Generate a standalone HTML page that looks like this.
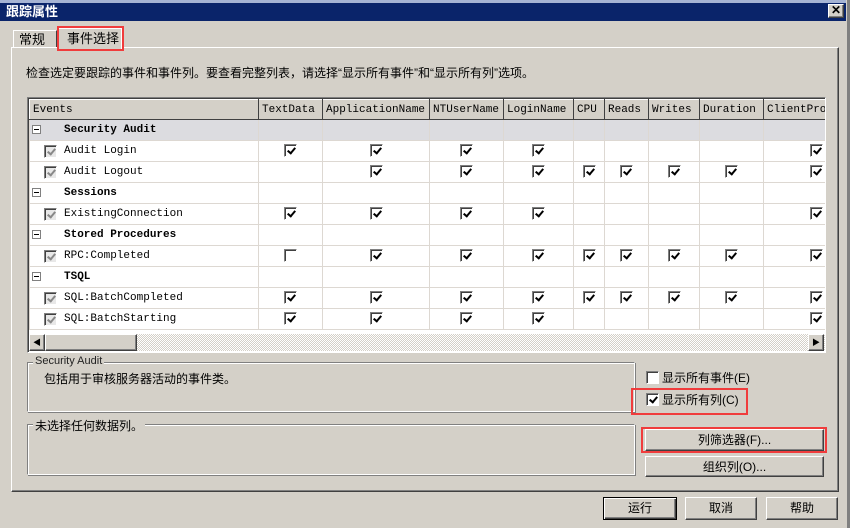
<!DOCTYPE html>
<html><head><meta charset="utf-8"><style>
*{box-sizing:border-box;margin:0;padding:0}
body{width:850px;height:528px;background:#d4d0c8;position:relative;overflow:hidden;font-family:"Liberation Sans","Noto Sans CJK SC",sans-serif;font-size:12px;color:#000}
.a{position:absolute}
.raised{border:1px solid;border-color:#fff #404040 #404040 #fff;box-shadow:inset -1px -1px #808080}
.grp{border:1px solid;border-color:#808080 #fff #fff #808080;box-shadow:inset 1px 1px #fff, 1px 1px #808080}
table{border-collapse:collapse;table-layout:fixed;font-family:"Liberation Mono","Noto Sans CJK SC",monospace;font-size:11px}
td{height:21px;border:1px solid #ddd8d2;padding:0;text-align:center;white-space:nowrap;overflow:hidden}
th{height:20px;font-weight:normal;text-align:left;padding-left:3px;background:#d4d0c8;border:1px solid;border-color:#fff #404040 #404040 #fff;white-space:nowrap;overflow:hidden}
td.ev{text-align:left;padding-left:34px;position:relative}
tr.g td{font-weight:bold}
tr.sel td{background:#dcdce0}
.cb{display:inline-block;width:13px;height:13px;border:1px solid;border-color:#808080 #fff #fff #808080;box-shadow:inset 1px 1px #404040;background:#fff;vertical-align:middle;position:relative}
.cb.k::after{content:"";position:absolute;left:4px;top:1px;width:3px;height:6px;border:solid #000;border-width:0 2px 2px 0;transform:rotate(40deg)}
.cb.g{background:#e8e8e8}
.cb.g::after{border-color:#888}
.cb.p{position:absolute;left:14px;top:4px}
td.r{text-align:right;padding-right:2px}
.mi{position:absolute;left:2px;top:5px;width:9px;height:9px;border:1px solid #808080;background:#fff}
.mi::after{content:"";position:absolute;left:1px;top:3px;width:5px;height:1px;background:#000}
.btn{position:absolute;text-align:center;line-height:20px;background:#d4d0c8}
</style></head><body>
<div class="a" style="left:0;top:0;width:850px;height:3px;background:#a6b4d4"></div>
<div class="a" style="left:0;top:3px;width:846px;height:18px;background:#0a246a;color:#fff;font-weight:bold;font-size:13px;line-height:18px;padding-left:6px">跟踪属性</div>
<div class="a raised" style="left:828px;top:4px;width:16px;height:14px;background:#d4d0c8;font-size:12px;line-height:11px;text-align:center;font-weight:bold">✕</div>
<div class="a" style="left:846px;top:0;width:4px;height:528px;background:#808080;border-left:1px solid #d4d0c8"></div>

<div class="a" style="left:13px;top:30px;width:44px;height:18px;border:1px solid;border-color:#fff #404040 transparent #fff;padding-left:5px;line-height:17px;font-size:13px">常规</div>
<div class="a" style="left:11px;top:47px;width:828px;height:445px;border:1px solid;border-color:#fff #404040 #404040 #fff;box-shadow:inset -1px -1px #808080"></div>
<div class="a" style="left:58px;top:28px;width:64px;height:21px;background:#d4d0c8;border:1px solid #fff;border-bottom:none;line-height:19px;padding-left:8px;font-size:13px">事件选择</div>
<div class="a" style="left:57px;top:26px;width:67px;height:25px;border:2px solid #f03c3c"></div>

<div class="a" style="left:26px;top:64px;font-size:12px">检查选定要跟踪的事件和事件列。要查看完整列表，请选择“显示所有事件”和“显示所有列”选项。</div>

<div class="a" style="left:27px;top:97px;width:799px;height:256px;border:1px solid;border-color:#808080 #fff #fff #808080;box-shadow:inset 1px 1px #404040;background:#fff;overflow:hidden">
<table style="width:796px;margin-left:1px;margin-top:1px">
<colgroup><col style="width:229px"><col style="width:64px"><col style="width:107px"><col style="width:74px"><col style="width:70px"><col style="width:31px"><col style="width:44px"><col style="width:51px"><col style="width:64px"><col style="width:62px"></colgroup>
<tr><th>Events</th><th>TextData</th><th>ApplicationName</th><th>NTUserName</th><th>LoginName</th><th>CPU</th><th>Reads</th><th>Writes</th><th>Duration</th><th>ClientProc</th></tr>
<tr class="g sel"><td class="ev"><span class="mi"></span>Security Audit</td><td></td><td></td><td></td><td></td><td></td><td></td><td></td><td></td><td></td></tr>
<tr><td class="ev"><span class="cb k g p"></span>Audit Login</td><td><span class="cb k"></span></td><td><span class="cb k"></span></td><td><span class="cb k"></span></td><td><span class="cb k"></span></td><td></td><td></td><td></td><td></td><td class="r"><span class="cb k"></span></td></tr>
<tr><td class="ev"><span class="cb k g p"></span>Audit Logout</td><td></td><td><span class="cb k"></span></td><td><span class="cb k"></span></td><td><span class="cb k"></span></td><td><span class="cb k"></span></td><td><span class="cb k"></span></td><td><span class="cb k"></span></td><td><span class="cb k"></span></td><td class="r"><span class="cb k"></span></td></tr>
<tr class="g"><td class="ev"><span class="mi"></span>Sessions</td><td></td><td></td><td></td><td></td><td></td><td></td><td></td><td></td><td></td></tr>
<tr><td class="ev"><span class="cb k g p"></span>ExistingConnection</td><td><span class="cb k"></span></td><td><span class="cb k"></span></td><td><span class="cb k"></span></td><td><span class="cb k"></span></td><td></td><td></td><td></td><td></td><td class="r"><span class="cb k"></span></td></tr>
<tr class="g"><td class="ev"><span class="mi"></span>Stored Procedures</td><td></td><td></td><td></td><td></td><td></td><td></td><td></td><td></td><td></td></tr>
<tr><td class="ev"><span class="cb k g p"></span>RPC:Completed</td><td><span class="cb"></span></td><td><span class="cb k"></span></td><td><span class="cb k"></span></td><td><span class="cb k"></span></td><td><span class="cb k"></span></td><td><span class="cb k"></span></td><td><span class="cb k"></span></td><td><span class="cb k"></span></td><td class="r"><span class="cb k"></span></td></tr>
<tr class="g"><td class="ev"><span class="mi"></span>TSQL</td><td></td><td></td><td></td><td></td><td></td><td></td><td></td><td></td><td></td></tr>
<tr><td class="ev"><span class="cb k g p"></span>SQL:BatchCompleted</td><td><span class="cb k"></span></td><td><span class="cb k"></span></td><td><span class="cb k"></span></td><td><span class="cb k"></span></td><td><span class="cb k"></span></td><td><span class="cb k"></span></td><td><span class="cb k"></span></td><td><span class="cb k"></span></td><td class="r"><span class="cb k"></span></td></tr>
<tr><td class="ev"><span class="cb k g p"></span>SQL:BatchStarting</td><td><span class="cb k"></span></td><td><span class="cb k"></span></td><td><span class="cb k"></span></td><td><span class="cb k"></span></td><td></td><td></td><td></td><td></td><td class="r"><span class="cb k"></span></td></tr>
</table>
<div class="a" style="left:1px;top:236px;width:796px;height:17px;background:repeating-conic-gradient(#fff 0 25%,#d4d0c8 0 50%) 0 0/2px 2px"></div>
<div class="a raised" style="left:1px;top:236px;width:16px;height:17px;background:#d4d0c8;font-size:8px;line-height:15px;text-align:center">◀</div>
<div class="a raised" style="left:17px;top:236px;width:92px;height:17px;background:#d4d0c8"></div>
<div class="a raised" style="left:780px;top:236px;width:16px;height:17px;background:#d4d0c8;font-size:8px;line-height:15px;text-align:center">▶</div>
</div>

<div class="a grp" style="left:27px;top:362px;width:608px;height:50px"></div>
<div class="a" style="left:33px;top:355px;background:#d4d0c8;padding:0 2px;font-size:11px;color:#222">Security Audit</div>
<div class="a" style="left:44px;top:370px">包括用于审核服务器活动的事件类。</div>
<div class="a grp" style="left:27px;top:424px;width:608px;height:51px"></div>
<div class="a" style="left:33px;top:417px;background:#d4d0c8;padding:0 2px">未选择任何数据列。</div>

<span class="cb" style="position:absolute;left:646px;top:371px"></span>
<div class="a" style="left:662px;top:369px">显示所有事件(E)</div>
<span class="cb k" style="position:absolute;left:646px;top:393px"></span>
<div class="a" style="left:662px;top:391px">显示所有列(C)</div>
<div class="a" style="left:631px;top:388px;width:117px;height:27px;border:2px solid #f03c3c"></div>

<div class="btn raised" style="left:645px;top:429px;width:179px;height:22px">列筛选器(F)...</div>
<div class="a" style="left:641px;top:427px;width:186px;height:26px;border:2px solid #f03c3c"></div>
<div class="btn raised" style="left:645px;top:456px;width:179px;height:21px">组织列(O)...</div>

<div class="btn" style="left:603px;top:497px;width:74px;height:23px;border:1px solid #000;box-shadow:inset 1px 1px #fff,inset -1px -1px #404040,inset -2px -2px #808080">运行</div>
<div class="btn raised" style="left:685px;top:497px;width:72px;height:23px">取消</div>
<div class="btn raised" style="left:766px;top:497px;width:72px;height:23px">帮助</div>
</body></html>
